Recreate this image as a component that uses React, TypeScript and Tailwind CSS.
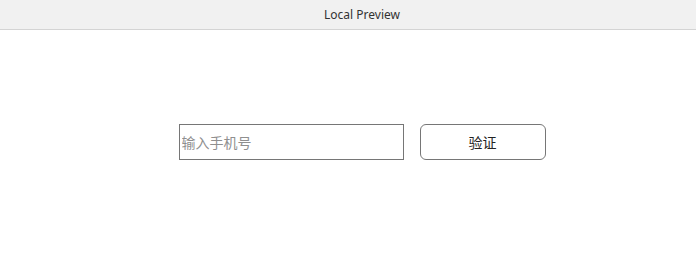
export default function App() {
  return (
    <div className="min-h-[273px] bg-white font-['Noto_Sans','Noto_Sans_CJK_SC',sans-serif]">
      <header className="flex h-[30px] items-center justify-center border-b border-[#d4d4d4] bg-[#f1f1f1] pl-[28px] text-[12px] text-[#333]">
        Local Preview
      </header>
      <main className="mt-[94px] flex justify-center pl-[28px]">
        <div className="flex items-center gap-[16px]">
          <input
            autoFocus
            placeholder="输入手机号"
            className="h-[36px] w-[225px] border border-[#767676] px-[2px] text-[14px] text-[#333] outline-none placeholder:text-[#8f8f8f]"
          />
          <button className="h-[36px] w-[126px] rounded-[6px] border border-[#767676] bg-white text-[14px] text-[#222]">
            验证
          </button>
        </div>
      </main>
    </div>
  );
}
